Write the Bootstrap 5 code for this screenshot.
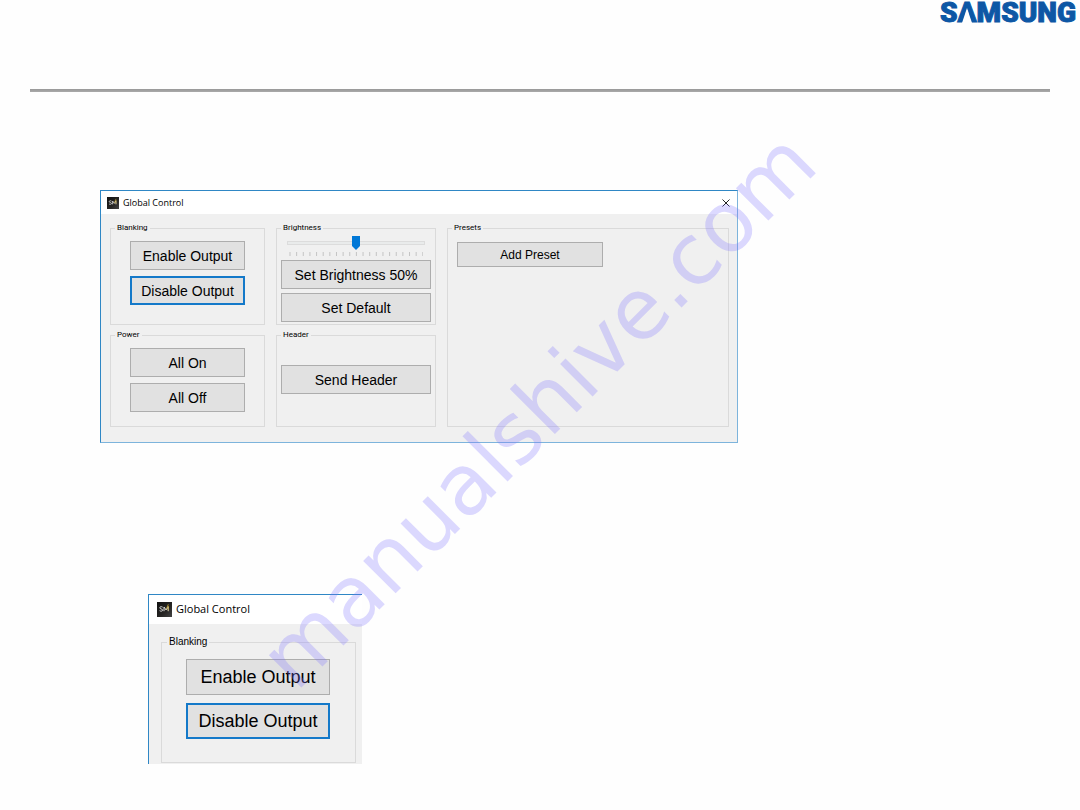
<!DOCTYPE html>
<html lang="en">
<head>
<meta charset="utf-8">
<meta name="viewport" content="width=device-width, initial-scale=1">
<title>Global Control</title>
<link href="https://cdn.jsdelivr.net/npm/bootstrap@5.3.0/dist/css/bootstrap.min.css" rel="stylesheet">
<style>
  body { background: #fefefe; color: #000; font-family: "Liberation Sans", Arial, sans-serif; overflow-x: hidden; }
  .page-head { height: 89px; }
  .brand-logo { overflow: visible; }
  .brand-logo text { font: 900 28px Roboto, sans-serif; fill: #0d57a5; stroke: #0d57a5; stroke-width: 1px; }
  .page-rule { height: 3px; margin: 0 30px; background: linear-gradient(#989898, #aaa); }
  .sheet { padding: 98px 100px 46px; }
  .win { border: 1px solid #2f87c5; border-right-color: #7db4dc; border-bottom-color: #7db4dc; background: #f0f0f0; max-width: 638px; }
  .win-title { height: 23px; padding: 0 7px 0 6px; background: #fff; font-family: "Open Sans", "Noto Sans", sans-serif; font-size: 9px; }
  .win-title svg { flex: none; }
  .win-close { border: 0; background: none; padding: 0; line-height: 0; }
  .win-body { display: grid; grid-template-columns: 155px 160px 1fr; grid-template-rows: 103px 98px; gap: 4px 11px; padding: 8px 8px 15px 9px; }
  .group { min-width: 0; border: 1px solid #dadada; padding: 0 19px; }
  .group legend { float: none; width: auto; margin: 0 0 0 -15px; padding: 0 2px; font-family: Roboto, "Liberation Sans", sans-serif; font-size: 8px; line-height: 12px; }
  .group.tight { padding: 0 4px; }
  .group.tight legend { margin-left: 0; }
  .presets { grid-column: 3; grid-row: 1 / span 2; padding: 0 9px; }
  .presets legend { margin-left: -5px; }
  .ctl { --bs-btn-padding-x: 0; --bs-btn-padding-y: 0; --bs-btn-border-radius: 0; --bs-btn-font-size: 14px; --bs-btn-line-height: 18px;
    --bs-btn-color: #000; --bs-btn-bg: #e1e1e1; --bs-btn-border-color: #adadad; --bs-btn-hover-bg: #e5f1fb; --bs-btn-hover-border-color: #0078d7;
    display: block; width: 100%; height: 29px; }
  .ctl.current { --bs-btn-border-color: #1479c9; --bs-btn-border-width: 2px; }
  .ctl.preset { width: 146px; height: 25px; --bs-btn-font-size: 12px; }
  .stack { display: grid; gap: 6px; padding-top: 7px; }
  .level { display: block; width: 138px; height: 16px; margin: 1px auto 0; appearance: none; background: none; }
  .level::-webkit-slider-runnable-track { height: 4px; border: 1px solid #dcdcdc; background: #e9ebeb; }
  .level::-webkit-slider-thumb { appearance: none; width: 8px; height: 14px; margin-top: -6px; background: #0078d7; clip-path: polygon(0 0, 100% 0, 100% 72%, 50% 100%, 0 72%); }
  .ticks { display: block; margin: 1px auto 4px; }
  .detail { width: 214px; margin: 151px 0 0 48px; border-width: 1px 0 0 1px; }
  .detail .win-title { height: 29px; padding-left: 8px; font-size: 11px; }
  .detail .group { height: 128px; margin: 11px 6px 1px 12px; padding: 0 25px 0 24px; }
  .detail .group legend { margin-left: -19px; font-family: inherit; font-size: 10px; line-height: 14px; }
  .detail .ctl { height: 36px; --bs-btn-font-size: 18px; }
  .detail .stack { gap: 8px; padding-top: 10px; }
  .watermark { left: 0; top: 0; pointer-events: none; }
  .watermark text { font: 84px "DejaVu Sans", sans-serif; fill: #7f72ff; fill-opacity: .27; stroke: #7f72ff; stroke-opacity: 0; }
</style>
</head>
<body class="position-relative">
<svg width="0" height="0" class="position-absolute" aria-hidden="true">
  <defs>
    <linearGradient id="tile" x1="0" y1="0" x2="1" y2="1"><stop offset="0" stop-color="#111"/><stop offset=".6" stop-color="#262523"/><stop offset="1" stop-color="#444"/></linearGradient>
    <symbol id="app" viewBox="0 0 15 15">
      <rect width="15" height="15" fill="url(#tile)"/>
      <path d="M5.6 5.1C4.3 4.3 2.8 4.7 2.8 5.8c0 1.5 2.8.8 2.8 2.3 0 1.2-1.700 1.400-3 .6M7 9.200V5l2.100 3 2.100-3.200V9.200" fill="none" stroke="#ddd" stroke-width="1"/>
      <path d="M9.200 7.600 11.300 2.300M11.300 4v4.500" stroke="#c8a83a" stroke-width=".8"/>
    </symbol>
  </defs>
</svg>
<header class="page-head d-flex justify-content-end align-items-start">
  <svg class="brand-logo" width="140" height="24" role="img" aria-label="SAMSUNG">
    <text x="0" y="22">SAMSUNG</text>
    <path d="M27 8 22 23H32Z" fill="#fefefe"/>
  </svg>
</header>
<div class="page-rule"></div>
<main class="sheet">
  <section class="win" aria-label="Global Control">
    <div class="win-title d-flex align-items-center">
      <svg width="12" height="12" class="me-1" aria-hidden="true"><use href="#app"/></svg>
      <span>Global Control</span>
      <button type="button" class="win-close ms-auto" aria-label="Close"><svg width="8" height="8" viewBox="0 0 8 8"><path d="M.5.5l7 7M7.500.5l-7 7" stroke="#222" fill="none"/></svg></button>
    </div>
    <div class="win-body">
      <fieldset class="group">
        <legend>Blanking</legend>
        <div class="stack">
          <button type="button" class="btn ctl">Enable Output</button>
          <button type="button" class="btn ctl current">Disable Output</button>
        </div>
      </fieldset>
      <fieldset class="group tight">
        <legend><label for="level" class="d-block">Brightness</label></legend>
        <input type="range" class="level" id="level" min="0" max="100" value="50">
        <svg class="ticks" width="134" height="4" aria-hidden="true">
          <path d="M.5 2H134" stroke="#c4c4c4" stroke-width="4" stroke-dasharray="1 5.640"/>
        </svg>
        <div class="d-grid gap-1">
          <button type="button" class="btn ctl">Set Brightness 50%</button>
          <button type="button" class="btn ctl">Set Default</button>
        </div>
      </fieldset>
      <fieldset class="group presets">
        <legend>Presets</legend>
        <div class="pt-2"><button type="button" class="btn ctl preset">Add Preset</button></div>
      </fieldset>
      <fieldset class="group">
        <legend>Power</legend>
        <div class="stack">
          <button type="button" class="btn ctl">All On</button>
          <button type="button" class="btn ctl">All Off</button>
        </div>
      </fieldset>
      <fieldset class="group tight">
        <legend>Header</legend>
        <div class="pt-4"><button type="button" class="btn ctl">Send Header</button></div>
      </fieldset>
    </div>
  </section>

  <section class="win detail" aria-label="Blanking controls">
    <div class="win-title d-flex align-items-center">
      <svg width="15" height="15" class="me-1" aria-hidden="true"><use href="#app"/></svg>
      <span>Global Control</span>
    </div>
    <div class="overflow-hidden">
      <fieldset class="group">
        <legend>Blanking</legend>
        <div class="stack">
          <button type="button" class="btn ctl">Enable Output</button>
          <button type="button" class="btn ctl current">Disable Output</button>
        </div>
      </fieldset>
    </div>
  </section>
</main>
<svg class="watermark position-absolute" width="900" height="800" aria-hidden="true">
  <text transform="translate(296 693) rotate(-45)">manualshive.com</text>
</svg>
<script src="https://cdn.jsdelivr.net/npm/bootstrap@5.3.0/dist/js/bootstrap.bundle.min.js"></script>
</body>
</html>
